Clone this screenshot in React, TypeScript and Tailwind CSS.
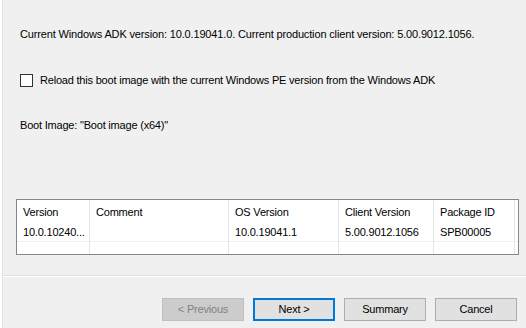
import React from 'react';

const cols = [
  { title: 'Version', value: '10.0.10240...' },
  { title: 'Comment', value: '' },
  { title: 'OS Version', value: '10.0.19041.1' },
  { title: 'Client Version', value: '5.00.9012.1056' },
  { title: 'Package ID', value: 'SPB00005' },
];

const Button = ({ label, primary, disabled }: { label: string; primary?: boolean; disabled?: boolean }) => (
  <button
    className={`w-[82px] h-[23px] text-[11px] leading-none ${
      disabled
        ? 'bg-[#cccccc] border border-[#bfbfbf] text-[#838383]'
        : primary
        ? 'bg-[#e1e1e1] border-2 border-[#0078d7] text-[#000]'
        : 'bg-[#e1e1e1] border border-[#adadad] text-[#000]'
    }`}
    disabled={disabled}
  >
    {label}
  </button>
);

const App = () => {
  return (
    <div
      className="w-[526px] h-[328px] bg-[#f0f0f0] flex text-[11px] tracking-[-0.2px] text-[#000] overflow-hidden"
      style={{ fontFamily: '"Liberation Sans", Arial, sans-serif' }}
    >
      <div className="w-[2px] bg-white" />
      <div className="w-px bg-[#e3e3e3]" />
      <div className="flex-1 flex flex-col">
        <div className="h-[275px] flex flex-col">
          <p className="mt-[26px] ml-[17px] leading-[16px] whitespace-nowrap tracking-[-0.15px]">
            Current Windows ADK version: 10.0.19041.0. Current production client version: 5.00.9012.1056.
          </p>
          <label className="mt-[30px] ml-[17px] h-[16px] flex items-center gap-[7px]">
            <span className="w-[13px] h-[13px] border border-[#333] bg-white" />
            <span className="leading-[16px]">Reload this boot image with the current Windows PE version from the Windows ADK</span>
          </label>
          <p className="mt-[29px] ml-[17px] leading-[16px]">Boot Image: "Boot image (x64)"</p>
          <div className="mt-[66px] ml-[13px] w-[503px] h-[56px] border border-[#828790] bg-white">
            <div className="grid grid-cols-[73px_139px_110px_95px_81px_1fr] h-full">
              {cols.map((c) => (
                <div key={c.title} className="flex flex-col border-r border-[#e5e5e5]">
                  <div className="h-[24px] flex items-center pl-[6px] leading-none">{c.title}</div>
                  <div className="h-[17px] flex items-center pl-[6px] leading-none">{c.value}</div>
                  <div className="h-px bg-[#f0f0f0]" />
                </div>
              ))}
              <div className="flex flex-col">
                <div className="h-[41px]" />
                <div className="h-px bg-[#f0f0f0]" />
              </div>
            </div>
          </div>
        </div>
        <div className="h-px bg-[#dfdfdf]" />
        <div className="h-px bg-white" />
        <div className="flex justify-end gap-[9px] pr-[9px] mt-[21px]">
          <Button label="< Previous" disabled />
          <Button label="Next >" primary />
          <Button label="Summary" />
          <Button label="Cancel" />
        </div>
      </div>
    </div>
  );
};

export default App;
